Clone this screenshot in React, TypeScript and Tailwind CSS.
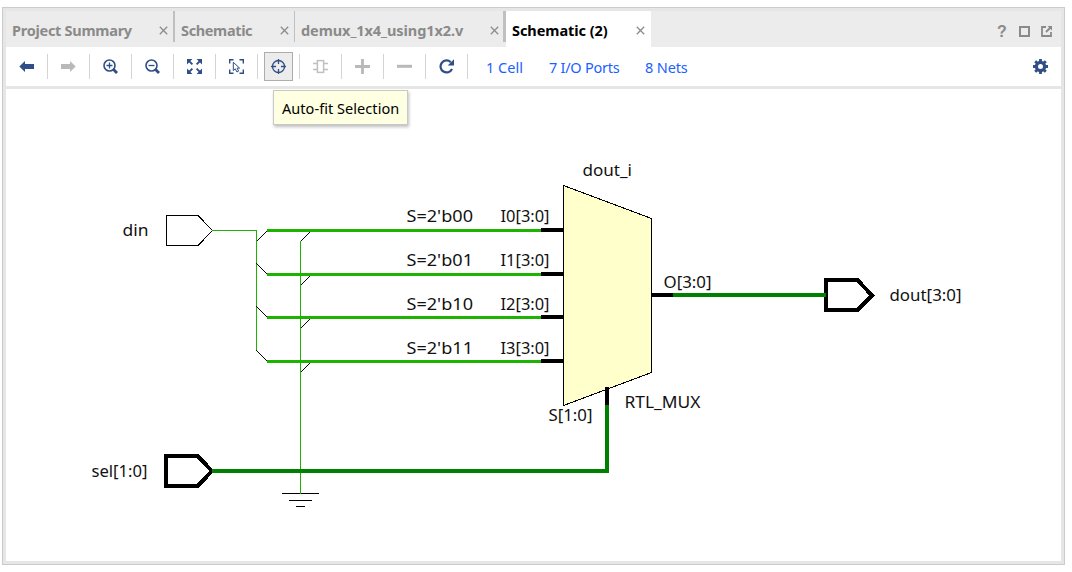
import type { ReactNode } from 'react';

const NAVY = '#2f4f86';
const MUTED = '#b9b9b9';

function CloseIcon() {
  return (
    <svg width="9" height="9" viewBox="0 0 9 9" fill="none" stroke="#8c8c8c" strokeWidth="1.3">
      <path d="M0.8 0.8 8.2 8.2M8.2 0.8 0.8 8.2" />
    </svg>
  );
}

function Icon({ color = NAVY, children }: { color?: string; children: ReactNode }) {
  return (
    <svg width="15" height="15" viewBox="0 0 15 15" fill="none" stroke={color} color={color}>
      {children}
    </svg>
  );
}

const tools: { name: string; active?: boolean; icon: ReactNode }[] = [
  {
    name: 'back',
    icon: (
      <Icon>
        <path d="M0.3 7.5 6 2V5H15V10H6V13Z" fill="currentColor" stroke="none" />
      </Icon>
    ),
  },
  {
    name: 'forward',
    icon: (
      <Icon color={MUTED}>
        <path d="M14.7 7.5 9 2V5H0V10H9V13Z" fill="currentColor" stroke="none" />
      </Icon>
    ),
  },
  {
    name: 'zoom-in',
    icon: (
      <Icon>
        <circle cx="6.5" cy="6.5" r="5.5" strokeWidth="1.6" />
        <path d="M3.5 6.5H9.5M6.5 3.5V9.5" strokeWidth="1.3" />
        <path d="M10.6 10.6 14 14" strokeWidth="2.8" />
      </Icon>
    ),
  },
  {
    name: 'zoom-out',
    icon: (
      <Icon>
        <circle cx="6.5" cy="6.5" r="5.5" strokeWidth="1.6" />
        <path d="M3.5 6.5H9.5" strokeWidth="1.3" />
        <path d="M10.6 10.6 14 14" strokeWidth="2.8" />
      </Icon>
    ),
  },
  {
    name: 'fit',
    icon: (
      <Icon>
        <path
          d="M0 0H5.4L0 5.4ZM15 0H9.6L15 5.4ZM0 15H5.4L0 9.6ZM15 15H9.6L15 9.6Z"
          fill="currentColor"
          stroke="none"
        />
        <path d="M1.5 1.5 5.4 5.4M13.5 1.5 9.6 5.4M1.5 13.5 5.4 9.6M13.5 13.5 9.6 9.6" strokeWidth="1.8" />
      </Icon>
    ),
  },
  {
    name: 'select-area',
    icon: (
      <Icon>
        <path
          d="M0.7 4.5V0.7H4.5M10.5 0.7H14.3V4.5M14.3 10.5V14.3H10.5M4.5 14.3H0.7V10.5"
          strokeWidth="1.4"
        />
        <path d="M4.3 3.3V11.6L6.3 9.8 7.9 13 9.6 12.1 8.1 9.1H10.6Z" strokeWidth="1" />
      </Icon>
    ),
  },
  {
    name: 'auto-fit',
    active: true,
    icon: (
      <Icon>
        <circle cx="7.5" cy="7.5" r="6" strokeWidth="1.3" />
        <path d="M7.5 0V5M7.5 10V15M0 7.5H5M10 7.5H15" strokeWidth="1.3" />
      </Icon>
    ),
  },
  {
    name: 'cell',
    icon: (
      <Icon color="#c0c0c0">
        <rect x="4.4" y="1.6" width="6.2" height="11.8" strokeWidth="1.5" />
        <path d="M0 4.5H4M0 10.5H4M11 4.5H15M11 10.5H15" strokeWidth="1.6" />
      </Icon>
    ),
  },
  {
    name: 'plus',
    icon: (
      <Icon color={MUTED}>
        <path d="M0 7.5H15M7.5 0V15" strokeWidth="2.8" />
      </Icon>
    ),
  },
  {
    name: 'minus',
    icon: (
      <Icon color={MUTED}>
        <path d="M0 7.3H15" strokeWidth="3" />
      </Icon>
    ),
  },
  {
    name: 'refresh',
    icon: (
      <Icon>
        <path d="M11.8 3.2A6 6 0 1 0 13 10" strokeWidth="2.2" />
        <path d="M15 0.3V6.6H8.7Z" fill="currentColor" stroke="none" />
      </Icon>
    ),
  },
];

function Tab({ label, className, textClass }: { label: string; className: string; textClass: string }) {
  return (
    <div className={`flex h-[31px] items-center justify-between border-[#c0c0c0] pl-1.5 ${className}`}>
      <span className={`pt-[6px] text-[14.5px] leading-[20px] font-bold whitespace-nowrap text-[#8a8a8a] ${textClass}`}>
        {label}
      </span>
      <span className="pt-[7px]">
        <CloseIcon />
      </span>
    </div>
  );
}

const inputs = [
  { y: 229, code: "S=2'b00", pin: 'I0[3:0]', text: 222 },
  { y: 273, code: "S=2'b01", pin: 'I1[3:0]', text: 266 },
  { y: 316, code: "S=2'b10", pin: 'I2[3:0]', text: 310 },
  { y: 360, code: "S=2'b11", pin: 'I3[3:0]', text: 354 },
];

function Label({ x, y, w, children }: { x: number; y: number; w: number; children: string }) {
  return (
    <text x={x} y={y} textLength={w} lengthAdjust="spacingAndGlyphs" fill="#111" fontSize="17">
      {children}
    </text>
  );
}

function Schematic() {
  return (
    <svg width="1055" height="472" viewBox="6 89 1055 472" className="block">
      <g shapeRendering="crispEdges" fill="none" stroke="#000" strokeWidth="1">
        <path d="M166.5 215.5H198L212.5 230.5 198 245.5H166.5Z" />
        <path d="M212 230.5H256.5V350M300.5 241V493" stroke="#1cb400" />
        <path d="M256.5 241.5 267.5 230.5M256.5 263.5 267.5 274.5M256.5 306.5 267.5 317.5M256.5 350.5 267.5 361.5" />
        <path d="M300.5 241.5 310.5 231.5M300.5 285.5 310.5 275.5M300.5 328.5 310.5 318.5M300.5 372.5 310.5 362.5" />
        {inputs.map((i) => (
          <g key={i.pin} stroke="none">
            <rect x="267" y={i.y} width="274" height="3" fill="#1cb400" />
            <rect x="541" y={i.y - 1} width="23" height="4" fill="#000" />
          </g>
        ))}
        <path d="M563.5 185.5 651.5 218.5V372.5L563.5 405.5Z" fill="#ffffcc" />
        <path d="M212 471H607V405" stroke="#008000" strokeWidth="4" />
        <path d="M607 387V405" strokeWidth="4" />
        <path d="M652 295H673" strokeWidth="4" />
        <path d="M166 456H197.5L212 471 197.5 486H166Z" strokeWidth="4" />
        <path d="M826 280H857.5L872 295.5 857.5 310H826Z" strokeWidth="4" />
        <path d="M673 295H826" stroke="#008000" strokeWidth="4" />
        <path d="M282 493.5H319M289 500.5H312M296 506.5H305" />
        <path d="M300.5 480V494" stroke="#1cb400" />
        <path d="M212 471H216" stroke="#008000" strokeWidth="4" />
      </g>
      {inputs.map((i) => (
        <g key={i.pin}>
          <Label x={406.5} y={i.text} w={66.5}>{i.code}</Label>
          <Label x={500.5} y={i.text} w={49}>{i.pin}</Label>
        </g>
      ))}
      <Label x={122.5} y={236} w={26}>din</Label>
      <Label x={91.5} y={477} w={56}>sel[1:0]</Label>
      <Label x={582.5} y={176} w={49.5}>dout_i</Label>
      <Label x={663.5} y={288} w={48}>O[3:0]</Label>
      <Label x={548.5} y={421} w={44}>S[1:0]</Label>
      <Label x={624.5} y={408} w={76}>RTL_MUX</Label>
      <Label x={889.5} y={301} w={72}>dout[3:0]</Label>
    </svg>
  );
}

export default function App() {
  return (
    <div className="h-[572px] w-[1072px] overflow-hidden bg-white pt-[7px] pl-[2px] font-['Noto_Sans',sans-serif]">
      <div className="flex h-[558px] w-[1063px] flex-col border border-[#cbcbcb] bg-[#e6e6e6] p-[3px] pb-[2px]">
        <div className="flex h-9 shrink-0 justify-between bg-[#ececec]">
          <div className="flex">
            <Tab label="Project Summary" className="w-[169px] border-r-2 pr-[5px]" textClass="tracking-[-0.27px]" />
            <Tab label="Schematic" className="w-[120px] border-r pr-[5px]" textClass="tracking-[-0.36px]" />
            <Tab label="demux_1x4_using1x2.v" className="w-[211px] border-r-[3px] pr-1" textClass="tracking-[-0.07px]" />
            <div className="flex h-9 w-[145px] justify-between bg-white pr-[6px] pl-1.5">
              <span className="mt-[9px] text-[14.5px] leading-[20px] font-bold tracking-[-0.05px] whitespace-nowrap text-black">
                Schematic (2)
              </span>
              <span className="mt-[15px]">
                <CloseIcon />
              </span>
            </div>
          </div>
          <div className="flex items-center gap-[11px] pt-1 pr-[9px]">
            <span className="w-[11px] pt-px text-[16px] leading-[16px] font-bold text-[#8a8a8a] font-['Liberation_Sans',sans-serif]">
              ?
            </span>
            <svg width="11" height="11" viewBox="0 0 11 11" fill="none" stroke="#8a8a8a" strokeWidth="2">
              <path d="M1 1H10V10H1Z" />
            </svg>
            <svg width="11" height="11" viewBox="0 0 11 11" fill="none" stroke="#8a8a8a" strokeWidth="1.8">
              <path d="M5 1H1V10H10V6M5 6 9.5 1.5" />
              <path d="M6.5 0H11V4.5Z" fill="#8a8a8a" stroke="none" />
            </svg>
          </div>
        </div>
        <div className="relative flex h-[39px] shrink-0 items-center bg-white">
          {tools.map((t) => (
            <div key={t.name} className="flex h-[25px] w-[42px] items-center justify-center border-r border-[#d4d4d4]">
              {t.active ? (
                <div className="flex h-[29px] w-[29px] shrink-0 items-center justify-center border border-[#adadad] bg-[#ececec]">
                  {t.icon}
                </div>
              ) : (
                t.icon
              )}
            </div>
          ))}
          <div className="flex items-center pl-[18px] text-[14.5px] leading-[20px] whitespace-nowrap text-[#1a5fff]">
            <span className="w-[63px]">1 Cell</span>
            <span className="w-[96px] tracking-[-0.25px]">7 I/O Ports</span>
            <span className="tracking-[-0.15px]">8 Nets</span>
          </div>
          <div className="ml-auto pr-[13px]">
            <Icon>
              <circle cx="7.5" cy="7.5" r="4.1" strokeWidth="3.2" />
              <path
                d="M7.5 0V3M7.5 12V15M0 7.5H3M12 7.5H15M2.2 2.2 4.3 4.3M10.7 10.7 12.8 12.8M2.2 12.8 4.3 10.7M10.7 4.3 12.8 2.2"
                strokeWidth="2.8"
              />
            </Icon>
          </div>
          <div className="absolute top-[43px] left-[267px] z-10 flex h-[35px] w-[135px] items-center border border-[#c8c8c8] bg-[#ffffe1] pt-[2px] pl-2 text-[14.5px] tracking-[0.05px] whitespace-nowrap text-black shadow-[1px_2px_3px_rgba(0,0,0,0.25)]">
            Auto-fit Selection
          </div>
        </div>
        <div className="mt-[3px] h-[472px] shrink-0 bg-white">
          <Schematic />
        </div>
      </div>
    </div>
  );
}
